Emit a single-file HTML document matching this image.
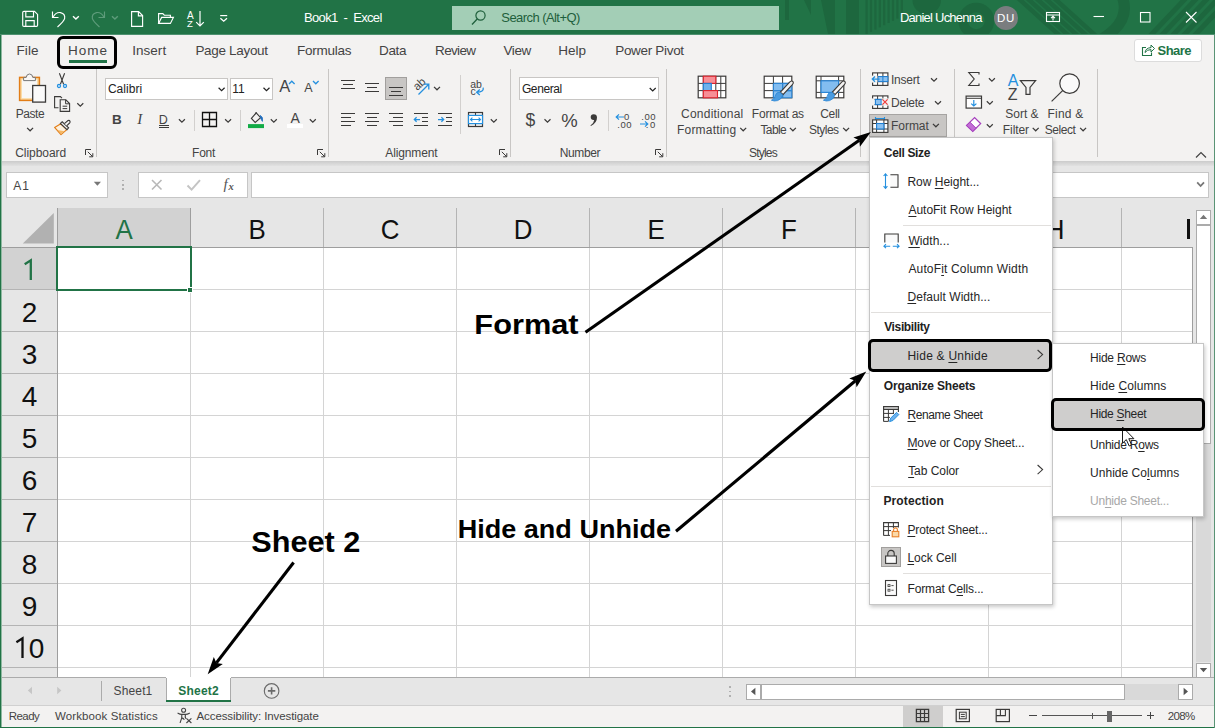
<!DOCTYPE html>
<html><head><meta charset="utf-8"><title>Excel</title>
<style>
*{box-sizing:border-box;margin:0;padding:0}
html,body{width:1215px;height:728px;overflow:hidden;background:#fff;font-family:"Liberation Sans",sans-serif}
.a{position:absolute;display:block}
.t{position:absolute;white-space:pre;font-family:"Liberation Sans",sans-serif}
.t u{text-decoration:underline;text-underline-offset:1.5px;text-decoration-thickness:1px}
</style></head><body>
<div class="a" style="left:0px;top:0px;width:1215px;height:35px;background:#217346;"></div>
<svg class="a" style="left:770px;top:0px;overflow:hidden;" width="445" height="34" viewBox="0 0 445 34"><g fill="#1d673e"><rect x="15" y="0" width="4" height="20"/><path d="M34 0H41V15Z"/><path d="M51 0H65V34H58Z"/><rect x="76" y="0" width="13" height="34"/><rect x="95.5" y="0" width="2.2" height="34.0"/><rect x="99.9" y="0" width="2.2" height="31.8"/><rect x="104.3" y="0" width="2.2" height="29.6"/><rect x="108.7" y="0" width="2.2" height="27.4"/><rect x="113.1" y="0" width="2.2" height="25.2"/><rect x="117.5" y="0" width="2.2" height="23.0"/><rect x="121.9" y="0" width="2.2" height="20.8"/><rect x="126.3" y="0" width="2.2" height="18.6"/><rect x="130.7" y="0" width="2.2" height="16.4"/><path d="M142.5 0A14.2 14.2 0 0 0 171 0Z"/></g><g fill="none" stroke="#1d673e"><circle cx="206.3" cy="20.8" r="13.2" stroke-width="9.5"/><path d="M248 -2L290 36" stroke-width="4.5"/><path d="M257 -2L299 36" stroke-width="4.5"/><path d="M266 -2L308 36" stroke-width="4.5"/><path d="M275 -2L317 36" stroke-width="4.5"/><path d="M284 -2L326 36" stroke-width="4.5"/><path d="M352 -4Q362 22 330 40" stroke-width="11"/><path d="M380 36L416 -2" stroke-width="5"/><path d="M391 36L427 -2" stroke-width="5"/><path d="M402 36L438 -2" stroke-width="5"/><path d="M413 36L449 -2" stroke-width="5"/><path d="M424 36L460 -2" stroke-width="5"/></g></svg>
<div class="a" style="left:0px;top:35px;width:1215px;height:126px;background:#f3f2f1;"></div>
<div class="a" style="left:0px;top:34px;width:1215px;height:1px;background:#4e9170;"></div>
<div class="a" style="left:0px;top:161px;width:1215px;height:6px;background:linear-gradient(#cbcbcb,#d6d6d6 40%,#e6e6e6);"></div>
<div class="a" style="left:0px;top:166px;width:1215px;height:42px;background:#e6e6e6;"></div>
<div class="a" style="left:0px;top:677px;width:1215px;height:28px;background:#e6e6e6;"></div>
<div class="a" style="left:0px;top:677px;width:1215px;height:1px;background:#ababab;"></div>
<div class="a" style="left:0px;top:705px;width:1215px;height:23px;background:#f3f2f1;"></div>
<div class="a" style="left:0px;top:705px;width:1215px;height:1px;background:#d0d0d0;"></div>
<span class="t" style="left:303.96px;top:9.00px;font-size:13px;line-height:17px;color:#fff;letter-spacing:-0.646px;">Book1  -  Excel</span>
<div class="a" style="left:452px;top:6px;width:327px;height:24px;background:#a3ceb6;"></div>
<span class="t" style="left:501.35px;top:9.00px;font-size:13px;line-height:17px;color:#1f5f3c;letter-spacing:-0.568px;">Search (Alt+Q)</span>
<svg class="a" style="left:470px;top:9px;" width="18" height="18" viewBox="0 0 18 18"><circle cx="10.5" cy="6.5" r="4.6" fill="none" stroke="#1f5f3c" stroke-width="1.2"/><path d="M7.2 10L2 15.5" stroke="#1f5f3c" stroke-width="1.3" fill="none"/></svg>
<span class="t" style="left:899.96px;top:9.00px;font-size:13px;line-height:17px;color:#fff;letter-spacing:-0.771px;">Daniel Uchenna</span>
<div class="a" style="left:994px;top:6px;width:24px;height:24px;background:#7a7d7f;border-radius:12px;"></div>
<span class="t" style="left:997.08px;top:11.00px;font-size:11.5px;line-height:15px;color:#fff;letter-spacing:0.665px;">DU</span>
<svg class="a" style="left:1045px;top:11px;" width="16" height="12" viewBox="0 0 16 12"><rect x="1.5" y="1.5" width="13" height="9" stroke="#fff" fill="none" stroke-width="1.1"/><path d="M1.5 4H14.5M8 9.5V5.5M6 7.2L8 5.3L10 7.2" stroke="#fff" fill="none" stroke-width="1.1"/></svg>
<svg class="a" style="left:1092px;top:12px;" width="14" height="10" viewBox="0 0 14 10"><path d="M1.5 4.5H12" stroke="#fff" fill="none" stroke-width="1.1"/></svg>
<svg class="a" style="left:1139px;top:11px;" width="12" height="12" viewBox="0 0 12 12"><rect x="1.5" y="1.5" width="9.5" height="9.5" stroke="#fff" fill="none" stroke-width="1.1"/></svg>
<svg class="a" style="left:1184px;top:10px;" width="14" height="14" viewBox="0 0 14 14"><path d="M2 2L12.5 12.5M12.5 2L2 12.5" stroke="#fff" fill="none" stroke-width="1.1"/></svg>
<svg class="a" style="left:21px;top:10px;" width="18" height="18" viewBox="0 0 18 18"><path d="M1.7 2.5Q1.7 1.3 2.9 1.3H13.5L16.6 4.4V15.2Q16.6 16.4 15.4 16.4H2.9Q1.7 16.4 1.7 15.2Z" stroke="#fff" fill="none" stroke-width="1.15"/><path d="M4.8 1.3V6.8H12.5V1.3M4.8 16.4V10.6H13.2V16.4" stroke="#fff" fill="none" stroke-width="1.15"/></svg>
<svg class="a" style="left:51px;top:10px;" width="16" height="18" viewBox="0 0 16 18"><path d="M1.5 1.5V7.5H7.5" stroke="#fff" fill="none" stroke-width="1.15"/><path d="M2 7.2Q5 1.8 9.5 2.6Q14.5 3.8 13.6 8.6Q13 11 6.5 17" stroke="#fff" fill="none" stroke-width="1.15"/></svg>
<svg class="a" style="left:72px;top:15px;" width="8" height="6" viewBox="0 0 8 6"><path d="M1 1.2L3.9 4L6.8 1.2" stroke="#fff" fill="none" stroke-width="1.4"/></svg>
<svg class="a" style="left:90px;top:10px;" width="16" height="18" viewBox="0 0 16 18"><path d="M14.5 1.5V7.5H8.5" stroke="#5e9c7b" fill="none" stroke-width="1.15"/><path d="M14 7.2Q11 1.8 6.5 2.6Q1.5 3.8 2.4 8.6Q3 11 9.5 17" stroke="#5e9c7b" fill="none" stroke-width="1.15"/></svg>
<svg class="a" style="left:111px;top:15px;" width="8" height="6" viewBox="0 0 8 6"><path d="M1 1.2L3.9 4L6.8 1.2" stroke="#5e9c7b" fill="none" stroke-width="1.4"/></svg>
<svg class="a" style="left:130px;top:10px;" width="14" height="18" viewBox="0 0 14 18"><path d="M1.6 1.6H8.6L12.6 5.6V16.4H1.6Z" stroke="#fff" fill="none" stroke-width="1.15"/><path d="M8.4 1.6V5.8H12.6" stroke="#fff" fill="none" stroke-width="1.15"/></svg>
<svg class="a" style="left:157px;top:12px;" width="18" height="13" viewBox="0 0 18 13"><path d="M1.6 11.4V1.6H5.8L7.3 3.2H13.4V5.4" stroke="#fff" fill="none" stroke-width="1.15"/><path d="M1.6 11.4L4.6 5.4H16.4L13.4 11.4Z" stroke="#fff" fill="none" stroke-width="1.15"/></svg>
<span class="t" style="left:187.00px;top:9.00px;font-size:10px;line-height:13px;color:#fff;letter-spacing:0.000px;">A</span>
<span class="t" style="left:187.12px;top:18.00px;font-size:9.5px;line-height:12px;color:#fff;letter-spacing:0.000px;">Z</span>
<svg class="a" style="left:195px;top:10px;" width="10" height="18" viewBox="0 0 10 18"><path d="M5 1V16M1.2 12.2L5 16L8.8 12.2" stroke="#fff" fill="none" stroke-width="1.2"/></svg>
<svg class="a" style="left:219px;top:14px;" width="10" height="9" viewBox="0 0 10 9"><path d="M1.2 1.6H8.2" stroke="#fff" stroke-width="1.2"/><path d="M1.4 4.2L4.7 7.2L8 4.2" stroke="#fff" fill="none" stroke-width="1.3"/></svg>
<span class="t" style="left:16.42px;top:42.00px;font-size:13.5px;line-height:18px;color:#444;letter-spacing:0.128px;">File</span>
<span class="t" style="left:67.92px;top:42.00px;font-size:13.5px;line-height:18px;color:#444;letter-spacing:1.003px;">Home</span>
<span class="t" style="left:132.28px;top:42.00px;font-size:13.5px;line-height:18px;color:#444;letter-spacing:0.020px;">Insert</span>
<span class="t" style="left:195.42px;top:42.00px;font-size:13.5px;line-height:18px;color:#444;letter-spacing:-0.316px;">Page Layout</span>
<span class="t" style="left:296.92px;top:42.00px;font-size:13.5px;line-height:18px;color:#444;letter-spacing:-0.239px;">Formulas</span>
<span class="t" style="left:379.12px;top:42.00px;font-size:13.5px;line-height:18px;color:#444;letter-spacing:-0.413px;">Data</span>
<span class="t" style="left:435.12px;top:42.00px;font-size:13.5px;line-height:18px;color:#444;letter-spacing:-0.680px;">Review</span>
<span class="t" style="left:503.47px;top:42.00px;font-size:13.5px;line-height:18px;color:#444;letter-spacing:-0.397px;">View</span>
<span class="t" style="left:558.22px;top:42.00px;font-size:13.5px;line-height:18px;color:#444;letter-spacing:0.037px;">Help</span>
<span class="t" style="left:615.22px;top:42.00px;font-size:13.5px;line-height:18px;color:#444;letter-spacing:-0.317px;">Power Pivot</span>
<div class="a" style="left:69px;top:60px;width:38px;height:3px;background:#217346;"></div>
<div class="a" style="left:57px;top:36px;width:60px;height:33px;border:3px solid #000;border-radius:6px;"></div>
<div class="a" style="left:1134px;top:38.5px;width:68px;height:23.5px;background:#fff;border:1px solid #dcdcdc;border-radius:3px;"></div>
<span class="t" style="left:1157.61px;top:42.00px;font-size:13px;line-height:17px;color:#217346;letter-spacing:-0.557px;font-weight:700;">Share</span>
<svg class="a" style="left:1140px;top:43px;" width="16" height="14" viewBox="0 0 16 14"><path d="M6 4.5H2.5V12.5H11.5V9.5" stroke="#217346" fill="none" stroke-width="1.1"/><path d="M5 9.5Q5.5 5 11 4.6V2L14.5 5.5L11 9V6.6Q7 6.6 5 9.5Z" stroke="#217346" fill="none" stroke-width="1"/></svg>
<svg class="a" style="left:1194px;top:150px;" width="14" height="10" viewBox="0 0 14 10"><path d="M2 7.5L7 2.5L12 7.5" stroke="#444" fill="none" stroke-width="1.2"/></svg>
<div class="a" style="left:96.0px;top:69px;width:1px;height:88px;background:#c8c6c4;"></div>
<div class="a" style="left:328.0px;top:69px;width:1px;height:88px;background:#c8c6c4;"></div>
<div class="a" style="left:510.0px;top:69px;width:1px;height:88px;background:#c8c6c4;"></div>
<div class="a" style="left:666.0px;top:69px;width:1px;height:88px;background:#c8c6c4;"></div>
<div class="a" style="left:860.0px;top:69px;width:1px;height:88px;background:#c8c6c4;"></div>
<div class="a" style="left:954.0px;top:69px;width:1px;height:88px;background:#c8c6c4;"></div>
<div class="a" style="left:1097.0px;top:69px;width:1px;height:88px;background:#c8c6c4;"></div>
<svg class="a" style="left:17px;top:72px;" width="31" height="32" viewBox="0 0 31 32"><rect x="2.6" y="5.4" width="19.8" height="23" fill="#fad9a0" stroke="#e27d17" stroke-width="1.5"/><rect x="4.9" y="7.6" width="15.2" height="18.6" fill="#f8f7f6" stroke="none"/><path d="M6.6 8.6V5.4H9.2Q9.6 2 12.5 2Q15.4 2 15.8 5.4H18.4V8.6Z" fill="#f8f7f6" stroke="#777" stroke-width="1"/><rect x="15.7" y="13.5" width="12.8" height="16.6" fill="#fafafa" stroke="#3b3a39" stroke-width="1.3"/></svg>
<span class="t" style="left:15.74px;top:106.00px;font-size:12px;line-height:16px;color:#444;letter-spacing:-0.465px;">Paste</span>
<svg class="a" style="left:26px;top:127px;" width="9" height="7.2" viewBox="0 0 9 7.2"><path d="M1.10 0.90l3.00 2.90l3.00 -2.90" stroke="#3b3a39" fill="none" stroke-width="1.2"/></svg>
<svg class="a" style="left:55px;top:72px;" width="14" height="18" viewBox="0 0 14 18"><path d="M4.4 1.2L8.6 12.2M9.6 1.2L5.4 12.2" stroke="#3b3a39" stroke-width="1.1" fill="none"/><circle cx="4" cy="14" r="1.55" fill="#cfe6f8" stroke="#2490df" stroke-width="1.2"/><circle cx="10" cy="14" r="1.55" fill="#cfe6f8" stroke="#2490df" stroke-width="1.2"/></svg>
<svg class="a" style="left:53px;top:95px;" width="19" height="18" viewBox="0 0 19 18"><path d="M5.5 12.8H1.6V1.6H7.4L9 3.2" stroke="#3b3a39" fill="none" stroke-width="1.1"/><path d="M7.2 4.8H12.8L16.6 8.6V16.4H7.2Z" fill="#f3f2f1" stroke="#3b3a39" stroke-width="1.1"/><path d="M12.6 4.8V8.8H16.6M9.6 11.2H14.2M9.6 13.6H14.2" stroke="#3b3a39" fill="none" stroke-width="1"/></svg>
<svg class="a" style="left:76px;top:102px;" width="9" height="7.2" viewBox="0 0 9 7.2"><path d="M1.30 1.30l3.00 2.90l3.00 -2.90" stroke="#3b3a39" fill="none" stroke-width="1.2"/></svg>
<svg class="a" style="left:53px;top:119px;" width="19" height="17" viewBox="0 0 19 17"><path d="M1.6 8.4L7.8 4.8L13.8 10.6L8 15.6Z" fill="#fdf1de" stroke="#e27d17" stroke-width="1.2" stroke-linejoin="round"/><path d="M4.4 11L8 15L11.6 12.2Z" fill="#f5b865"/><path d="M7.4 4.4L9.2 2.8L15.6 8.8L14 10.6Z" fill="#f3f2f1" stroke="#3b3a39" stroke-width="1.1"/><path d="M11.4 4.6L15 1.5Q16.4 0.9 17 2.2Q17.4 3.2 16.6 4L13.6 6.8" fill="#f3f2f1" stroke="#3b3a39" stroke-width="1.1"/></svg>
<span class="t" style="left:15.20px;top:145.00px;font-size:12px;line-height:16px;color:#444;letter-spacing:-0.053px;">Clipboard</span>
<svg class="a" style="left:85px;top:149px;" width="9" height="9" viewBox="0 0 9 9"><path d="M0.5 6V0.5H6" stroke="#3b3a39" fill="none" stroke-width="1"/><path d="M2.8 2.8L7.6 7.6M4.2 7.8H7.8V4.2" stroke="#3b3a39" fill="none" stroke-width="1"/></svg>
<div class="a" style="left:105px;top:77.5px;width:123px;height:22.5px;background:#fff;border:1px solid #c8c6c4;"></div>
<span class="t" style="left:107.90px;top:81.00px;font-size:12px;line-height:16px;color:#222;letter-spacing:0.060px;">Calibri</span>
<svg class="a" style="left:217px;top:87px;" width="9" height="7.2" viewBox="0 0 9 7.2"><path d="M1.60 0.80l3.00 2.90l3.00 -2.90" stroke="#222" fill="none" stroke-width="1.2"/></svg>
<div class="a" style="left:230px;top:77.5px;width:43px;height:22.5px;background:#fff;border:1px solid #c8c6c4;"></div>
<span class="t" style="left:232.34px;top:81.00px;font-size:12px;line-height:16px;color:#222;letter-spacing:0.000px;">11</span>
<svg class="a" style="left:262px;top:87px;" width="9" height="7.2" viewBox="0 0 9 7.2"><path d="M1.50 0.80l3.00 2.90l3.00 -2.90" stroke="#222" fill="none" stroke-width="1.2"/></svg>
<span class="t" style="left:279.30px;top:76.00px;font-size:16.5px;line-height:21px;color:#444;letter-spacing:0.000px;">A</span>
<svg class="a" style="left:288px;top:80px;" width="8" height="5" viewBox="0 0 8 5"><path d="M1 4L3.8 1.2L6.6 4" stroke="#2490df" fill="none" stroke-width="1.3"/></svg>
<span class="t" style="left:304.30px;top:80.00px;font-size:12.5px;line-height:16px;color:#444;letter-spacing:0.000px;">A</span>
<svg class="a" style="left:312px;top:80px;" width="8" height="5" viewBox="0 0 8 5"><path d="M1 1L3.8 3.8L6.6 1" stroke="#2490df" fill="none" stroke-width="1.3"/></svg>
<span class="t" style="left:112.06px;top:111.00px;font-size:13.5px;line-height:18px;color:#444;letter-spacing:0.000px;font-weight:700;">B</span>
<span class="t" style="left:137.30px;top:109.00px;font-size:15px;line-height:20px;color:#444;letter-spacing:0.000px;font-style:italic;font-family:'Liberation Serif',serif;">I</span>
<span class="t" style="left:158.80px;top:112.00px;font-size:12.5px;line-height:16px;color:#444;letter-spacing:0.000px;">D</span>
<div class="a" style="left:159.3px;top:125px;width:9.5px;height:1px;background:#3b3a39;"></div>
<div class="a" style="left:159.3px;top:127.3px;width:9.5px;height:1px;background:#3b3a39;"></div>
<svg class="a" style="left:178px;top:118px;" width="9" height="7.2" viewBox="0 0 9 7.2"><path d="M0.90 1.30l3.00 2.90l3.00 -2.90" stroke="#3b3a39" fill="none" stroke-width="1.2"/></svg>
<div class="a" style="left:194.0px;top:110px;width:1px;height:21px;background:#d2d0ce;"></div>
<svg class="a" style="left:201px;top:111px;" width="17" height="17" viewBox="0 0 17 17"><path d="M1.5 1.5H15.5V15.5H1.5ZM8.5 1.5V15.5M1.5 8.5H15.5" stroke="#111" fill="none" stroke-width="1.3"/></svg>
<svg class="a" style="left:224px;top:118px;" width="9" height="7.2" viewBox="0 0 9 7.2"><path d="M1.10 1.30l3.00 2.90l3.00 -2.90" stroke="#3b3a39" fill="none" stroke-width="1.2"/></svg>
<div class="a" style="left:240.0px;top:110px;width:1px;height:21px;background:#d2d0ce;"></div>
<svg class="a" style="left:248px;top:111px;" width="17" height="18" viewBox="0 0 17 18"><path d="M3.4 7.4L8.2 1.8L12.6 6.6L7.2 11.4Z" fill="#f3f2f1" stroke="#3b3a39" stroke-width="1.1"/><path d="M6.8 3.6L8.4 1" stroke="#3b3a39" stroke-width="1"/><path d="M12.4 4.4Q15.4 6 14.4 10.4Q12.8 8 12.6 6.6Z" fill="#1f6fc0" stroke="#1f6fc0" stroke-width=".8"/><rect x="0" y="13.1" width="16" height="4" fill="#12ab46"/></svg>
<svg class="a" style="left:269px;top:118px;" width="9" height="7.2" viewBox="0 0 9 7.2"><path d="M1.80 1.30l3.00 2.90l3.00 -2.90" stroke="#3b3a39" fill="none" stroke-width="1.2"/></svg>
<span class="t" style="left:290.60px;top:109.00px;font-size:14px;line-height:18px;color:#444;letter-spacing:0.000px;">A</span>
<div class="a" style="left:287px;top:124.1px;width:16px;height:4px;background:#fff;"></div>
<svg class="a" style="left:309px;top:118px;" width="9" height="7.2" viewBox="0 0 9 7.2"><path d="M0.80 1.30l3.00 2.90l3.00 -2.90" stroke="#3b3a39" fill="none" stroke-width="1.2"/></svg>
<span class="t" style="left:192.04px;top:145.00px;font-size:12px;line-height:16px;color:#444;letter-spacing:-0.207px;">Font</span>
<svg class="a" style="left:317px;top:149px;" width="9" height="9" viewBox="0 0 9 9"><path d="M0.5 6V0.5H6" stroke="#3b3a39" fill="none" stroke-width="1"/><path d="M2.8 2.8L7.6 7.6M4.2 7.8H7.8V4.2" stroke="#3b3a39" fill="none" stroke-width="1"/></svg>
<div class="a" style="left:341px;top:80px;width:14px;height:1px;background:#3b3a39;"></div>
<div class="a" style="left:343px;top:84px;width:10px;height:1px;background:#3b3a39;"></div>
<div class="a" style="left:341px;top:88px;width:14px;height:1px;background:#3b3a39;"></div>
<div class="a" style="left:365px;top:83px;width:14px;height:1px;background:#3b3a39;"></div>
<div class="a" style="left:367px;top:87px;width:10px;height:1px;background:#3b3a39;"></div>
<div class="a" style="left:365px;top:91px;width:14px;height:1px;background:#3b3a39;"></div>
<div class="a" style="left:385px;top:77px;width:22px;height:23px;background:#c8c6c4;border:1px solid #a19f9d;"></div>
<div class="a" style="left:389px;top:87px;width:14px;height:1px;background:#3b3a39;"></div>
<div class="a" style="left:391px;top:91px;width:10px;height:1px;background:#3b3a39;"></div>
<div class="a" style="left:389px;top:95px;width:14px;height:1px;background:#3b3a39;"></div>
<span class="t" style="left:412.5px;top:76.5px;font-size:11.5px;line-height:14px;color:#444;transform:rotate(-42deg);transform-origin:50% 50%;letter-spacing:-.2px">ab</span>
<svg class="a" style="left:417px;top:82px;" width="14" height="14" viewBox="0 0 14 14"><path d="M1.5 12.5L11.5 2.5M6.5 2.2H11.8V7.5" stroke="#2490df" fill="none" stroke-width="1.3"/></svg>
<svg class="a" style="left:433px;top:86px;" width="9" height="7.2" viewBox="0 0 9 7.2"><path d="M1.00 0.90l3.00 2.90l3.00 -2.90" stroke="#3b3a39" fill="none" stroke-width="1.2"/></svg>
<div class="a" style="left:460.0px;top:75px;width:1px;height:59px;background:#d2d0ce;"></div>
<span class="t" style="left:470.18px;top:77.00px;font-size:10.5px;line-height:14px;color:#444;letter-spacing:0.080px;">ab</span>
<span class="t" style="left:470.38px;top:84.00px;font-size:10.5px;line-height:14px;color:#444;letter-spacing:0.000px;">c</span>
<svg class="a" style="left:475px;top:86px;" width="10" height="11" viewBox="0 0 10 11"><path d="M8.2 1.6Q9 6.2 2 6.2M4.8 3.4L1.6 6.2L4.8 9" stroke="#2490df" fill="none" stroke-width="1.3"/></svg>
<div class="a" style="left:341px;top:113px;width:14px;height:1px;background:#3b3a39;"></div>
<div class="a" style="left:341px;top:117px;width:10px;height:1px;background:#3b3a39;"></div>
<div class="a" style="left:341px;top:121px;width:14px;height:1px;background:#3b3a39;"></div>
<div class="a" style="left:341px;top:125px;width:10px;height:1px;background:#3b3a39;"></div>
<div class="a" style="left:365px;top:113px;width:14px;height:1px;background:#3b3a39;"></div>
<div class="a" style="left:367px;top:117px;width:10px;height:1px;background:#3b3a39;"></div>
<div class="a" style="left:365px;top:121px;width:14px;height:1px;background:#3b3a39;"></div>
<div class="a" style="left:367px;top:125px;width:10px;height:1px;background:#3b3a39;"></div>
<div class="a" style="left:389px;top:113px;width:14px;height:1px;background:#3b3a39;"></div>
<div class="a" style="left:393px;top:117px;width:10px;height:1px;background:#3b3a39;"></div>
<div class="a" style="left:389px;top:121px;width:14px;height:1px;background:#3b3a39;"></div>
<div class="a" style="left:393px;top:125px;width:10px;height:1px;background:#3b3a39;"></div>
<div class="a" style="left:414px;top:113px;width:14px;height:1px;background:#3b3a39;"></div>
<div class="a" style="left:422px;top:117px;width:6px;height:1px;background:#3b3a39;"></div>
<div class="a" style="left:422px;top:121px;width:6px;height:1px;background:#3b3a39;"></div>
<div class="a" style="left:414px;top:125px;width:14px;height:1px;background:#3b3a39;"></div>
<div class="a" style="left:438px;top:113px;width:14px;height:1px;background:#3b3a39;"></div>
<div class="a" style="left:446px;top:117px;width:6px;height:1px;background:#3b3a39;"></div>
<div class="a" style="left:446px;top:121px;width:6px;height:1px;background:#3b3a39;"></div>
<div class="a" style="left:438px;top:125px;width:14px;height:1px;background:#3b3a39;"></div>
<svg class="a" style="left:413px;top:116px;" width="8" height="8" viewBox="0 0 8 8"><path d="M7 3.5H1.4M3.6 1.2L1.3 3.5L3.6 5.8" stroke="#2490df" fill="none" stroke-width="1.25"/></svg>
<svg class="a" style="left:437px;top:116px;" width="8" height="8" viewBox="0 0 8 8"><path d="M1 3.5H6.6M4.4 1.2L6.7 3.5L4.4 5.8" stroke="#2490df" fill="none" stroke-width="1.25"/></svg>
<svg class="a" style="left:467px;top:111px;" width="17" height="17" viewBox="0 0 17 17"><rect x="1.5" y="1.5" width="14" height="14" fill="none" stroke="#3b3a39" stroke-width="1.2"/><path d="M8.5 1.5V4.3M8.5 12.7V15.5" stroke="#3b3a39" stroke-width="1.1"/><rect x="1.5" y="4.4" width="14" height="8.2" fill="#fff" stroke="#2490df" stroke-width="1.2"/><path d="M3.6 8.5H13.4M5.4 6.6L3.5 8.5L5.4 10.4M11.6 6.6L13.5 8.5L11.6 10.4" stroke="#2490df" fill="none" stroke-width="1.1"/></svg>
<svg class="a" style="left:489px;top:118px;" width="9" height="7.2" viewBox="0 0 9 7.2"><path d="M1.80 1.30l3.00 2.90l3.00 -2.90" stroke="#3b3a39" fill="none" stroke-width="1.2"/></svg>
<span class="t" style="left:385.30px;top:145.00px;font-size:12px;line-height:16px;color:#444;letter-spacing:-0.122px;">Alignment</span>
<svg class="a" style="left:499px;top:149px;" width="9" height="9" viewBox="0 0 9 9"><path d="M0.5 6V0.5H6" stroke="#3b3a39" fill="none" stroke-width="1"/><path d="M2.8 2.8L7.6 7.6M4.2 7.8H7.8V4.2" stroke="#3b3a39" fill="none" stroke-width="1"/></svg>
<div class="a" style="left:519px;top:77px;width:140px;height:22.8px;background:#fff;border:1px solid #c8c6c4;"></div>
<span class="t" style="left:521.90px;top:81.00px;font-size:12px;line-height:16px;color:#222;letter-spacing:-0.383px;">General</span>
<svg class="a" style="left:648px;top:87px;" width="9" height="7.2" viewBox="0 0 9 7.2"><path d="M1.70 1.00l3.00 2.90l3.00 -2.90" stroke="#222" fill="none" stroke-width="1.2"/></svg>
<span class="t" style="left:525.62px;top:109.00px;font-size:17.5px;line-height:23px;color:#444;letter-spacing:0.000px;">$</span>
<svg class="a" style="left:543px;top:118px;" width="9" height="7.2" viewBox="0 0 9 7.2"><path d="M1.50 1.30l3.00 2.90l3.00 -2.90" stroke="#3b3a39" fill="none" stroke-width="1.2"/></svg>
<span class="t" style="left:561.15px;top:109.00px;font-size:18.5px;line-height:24px;color:#444;letter-spacing:0.000px;">%</span>
<svg class="a" style="left:589px;top:113px;" width="9" height="14" viewBox="0 0 9 14"><path d="M4.6 1.2A2.9 2.9 0 1 0 4.6 7 Q5 7 5.2 6.9Q5 10 1.4 12.4L2 13Q8 10 8 4.6Q8 1.2 4.6 1.2Z" fill="#3b3a39"/></svg>
<div class="a" style="left:608.0px;top:110px;width:1px;height:21px;background:#d2d0ce;"></div>
<span class="t" style="left:624.12px;top:111.00px;font-size:9.5px;line-height:12px;color:#444;letter-spacing:0.000px;">0</span>
<span class="t" style="left:617.14px;top:119.00px;font-size:9.5px;line-height:12px;color:#444;letter-spacing:0.615px;">.00</span>
<svg class="a" style="left:615px;top:113px;" width="10" height="8" viewBox="0 0 10 8"><path d="M9 4H1.4M4 1.4L1.2 4L4 6.6" stroke="#2490df" fill="none" stroke-width="1.2"/></svg>
<span class="t" style="left:641.14px;top:111.00px;font-size:9.5px;line-height:12px;color:#444;letter-spacing:0.615px;">.00</span>
<span class="t" style="left:645.75px;top:119.00px;font-size:9.5px;line-height:12px;color:#444;letter-spacing:1.655px;">.0</span>
<svg class="a" style="left:639px;top:120px;" width="10" height="8" viewBox="0 0 10 8"><path d="M1 4H8.6M6 1.4L8.8 4L6 6.6" stroke="#2490df" fill="none" stroke-width="1.2"/></svg>
<span class="t" style="left:559.84px;top:145.00px;font-size:12px;line-height:16px;color:#444;letter-spacing:-0.404px;">Number</span>
<svg class="a" style="left:655px;top:149px;" width="9" height="9" viewBox="0 0 9 9"><path d="M0.5 6V0.5H6" stroke="#3b3a39" fill="none" stroke-width="1"/><path d="M2.8 2.8L7.6 7.6M4.2 7.8H7.8V4.2" stroke="#3b3a39" fill="none" stroke-width="1"/></svg>
<svg class="a" style="left:697px;top:75px;" width="30" height="24" viewBox="0 0 30 24"><rect x="1.2" y="1.2" width="27.6" height="21.6" fill="#fff" stroke="#3b3a39" stroke-width="1.2"/><path d="M6.3 1.2V22.8M18.8 1.2V22.8M23.8 1.2V22.8M1.2 8.4H28.8M1.2 15.6H28.8" stroke="#3b3a39" stroke-width="1"/><rect x="6.3" y="1.2" width="12.5" height="7.2" fill="#f78f96" stroke="#e0222c" stroke-width="1.1"/><rect x="6.3" y="8.4" width="8" height="7.2" fill="#6fb1ec" stroke="#1f7fd4" stroke-width="1.1"/><rect x="6.3" y="15.6" width="14.2" height="7.2" fill="#f78f96" stroke="#e0222c" stroke-width="1.1"/></svg>
<span class="t" style="left:681.10px;top:106.00px;font-size:12px;line-height:16px;color:#444;letter-spacing:0.212px;">Conditional</span>
<span class="t" style="left:677.04px;top:122.00px;font-size:12px;line-height:16px;color:#444;letter-spacing:0.193px;">Formatting</span>
<svg class="a" style="left:739px;top:127px;" width="9" height="7.2" viewBox="0 0 9 7.2"><path d="M1.20 0.90l3.00 2.90l3.00 -2.90" stroke="#3b3a39" fill="none" stroke-width="1.2"/></svg>
<svg class="a" style="left:763px;top:75px;" width="33" height="29" viewBox="0 0 33 29"><rect x="1.2" y="1.2" width="27.6" height="21.6" fill="#fff" stroke="#3b3a39" stroke-width="1.2"/><rect x="10.4" y="8.4" width="18.4" height="14.4" fill="#83bdf0"/><path d="M10.4 1.2V22.8M19.6 1.2V22.8M1.2 8.4H28.8M1.2 15.6H28.8" stroke="#3b3a39" stroke-width="1"/><path d="M10.4 8.4V22.8M19.6 8.4V22.8M10.4 8.4H28.8M10.4 15.6H28.8M28.8 8.4V22.8H10.4" stroke="#2b86d6" fill="none" stroke-width="1.1"/><path d="M26.6 7.2Q28.6 5.2 30 6.6Q31 8 29.4 9.6L20 19.6L17.4 17Z" fill="#f3f2f1" stroke="#3b3a39" stroke-width="1.1"/><path d="M17 17.4L19.8 20Q19 24 14.6 25.6Q11 26.6 8.4 25.2Q12.6 23.6 12.6 20Q13.4 16.8 17 17.4Z" fill="#4a9be0" stroke="#2b86d6" stroke-width=".8"/></svg>
<span class="t" style="left:751.84px;top:106.00px;font-size:12px;line-height:16px;color:#444;letter-spacing:-0.220px;">Format as</span>
<span class="t" style="left:760.46px;top:122.00px;font-size:12px;line-height:16px;color:#444;letter-spacing:-0.610px;">Table</span>
<svg class="a" style="left:789px;top:127px;" width="9" height="7.2" viewBox="0 0 9 7.2"><path d="M0.90 0.90l3.00 2.90l3.00 -2.90" stroke="#3b3a39" fill="none" stroke-width="1.2"/></svg>
<svg class="a" style="left:815px;top:75px;" width="33" height="29" viewBox="0 0 33 29"><rect x="1.2" y="1.2" width="27.6" height="21.6" fill="#fff" stroke="#3b3a39" stroke-width="1.2"/><path d="M6 1.2V22.8M23.6 1.2V22.8M1.2 5.8H28.8M1.2 17.4H28.8" stroke="#3b3a39" stroke-width="1"/><rect x="6" y="5.8" width="17.6" height="11.6" fill="#83bdf0" stroke="#2b86d6" stroke-width="1.2"/><path d="M26.6 7.2Q28.6 5.2 30 6.6Q31 8 29.4 9.6L20 19.6L17.4 17Z" fill="#f3f2f1" stroke="#3b3a39" stroke-width="1.1"/><path d="M17 17.4L19.8 20Q19 24 14.6 25.6Q11 26.6 8.4 25.2Q12.6 23.6 12.6 20Q13.4 16.8 17 17.4Z" fill="#4a9be0" stroke="#2b86d6" stroke-width=".8"/></svg>
<span class="t" style="left:820.20px;top:106.00px;font-size:12px;line-height:16px;color:#444;letter-spacing:-0.273px;">Cell</span>
<span class="t" style="left:809.00px;top:122.00px;font-size:12px;line-height:16px;color:#444;letter-spacing:-0.532px;">Styles</span>
<svg class="a" style="left:842px;top:127px;" width="9" height="7.2" viewBox="0 0 9 7.2"><path d="M1.10 0.90l3.00 2.90l3.00 -2.90" stroke="#3b3a39" fill="none" stroke-width="1.2"/></svg>
<span class="t" style="left:749.00px;top:145.00px;font-size:12px;line-height:16px;color:#444;letter-spacing:-0.792px;">Styles</span>
<svg class="a" style="left:871px;top:72px;" width="18" height="15" viewBox="0 0 18 15"><rect x="1.6" y="0.9" width="15.3" height="12.5" fill="#fff" stroke="#3b3a39" stroke-width="1.15"/><path d="M6.6 0.9V13.4M11.9 0.9V13.4M1.6 4.6H16.9M1.6 9.6H16.9" stroke="#3b3a39" stroke-width="1"/><rect x="7" y="4.6" width="9.9" height="5" fill="#8cc1f0" stroke="#1f7fd4" stroke-width="1"/><path d="M11.9 4.6V9.6" stroke="#1f7fd4" stroke-width="1"/><rect x="0" y="3.6" width="6.4" height="7" fill="#f3f2f1"/><path d="M8.6 7.1H1.4M4 4.5L1.3 7.1L4 9.7" stroke="#2490df" fill="none" stroke-width="1.3"/></svg>
<span class="t" style="left:890.92px;top:72.00px;font-size:12px;line-height:16px;color:#444;letter-spacing:-0.220px;">Insert</span>
<svg class="a" style="left:930px;top:77px;" width="9" height="7.2" viewBox="0 0 9 7.2"><path d="M1.00 1.30l3.00 2.90l3.00 -2.90" stroke="#3b3a39" fill="none" stroke-width="1.2"/></svg>
<svg class="a" style="left:871px;top:95px;" width="18" height="15" viewBox="0 0 18 15"><rect x="1.6" y="0.9" width="15.3" height="12.5" fill="#fff" stroke="#3b3a39" stroke-width="1.15"/><path d="M6.6 0.9V13.4M11.9 0.9V13.4M1.6 4.4H16.9M1.6 9.6H16.9" stroke="#3b3a39" stroke-width="1"/><rect x="0" y="3.4" width="3.6" height="7.2" fill="#f3f2f1"/><rect x="4.4" y="4.4" width="5.8" height="5.2" fill="#8cc1f0" stroke="#1f7fd4" stroke-width="1.1"/><rect x="10.8" y="3.4" width="7.2" height="7.2" fill="#f3f2f1"/><path d="M11.4 4.4L16.6 9.6M16.6 4.4L11.4 9.6" stroke="#ee3b3b" stroke-width="1.2"/></svg>
<span class="t" style="left:891.04px;top:95.00px;font-size:12px;line-height:16px;color:#444;letter-spacing:-0.244px;">Delete</span>
<svg class="a" style="left:934px;top:100px;" width="9" height="7.2" viewBox="0 0 9 7.2"><path d="M1.00 1.30l3.00 2.90l3.00 -2.90" stroke="#3b3a39" fill="none" stroke-width="1.2"/></svg>
<div class="a" style="left:869px;top:114px;width:78px;height:22.5px;background:#c8c6c4;border:1px solid #a6a4a2;"></div>
<svg class="a" style="left:871px;top:116px;" width="18" height="18" viewBox="0 0 18 18"><path d="M4.5 1.1V3.9M13.5 1.1V3.9M4.5 2.5H13.5" stroke="#2490df" stroke-width="1.1" fill="none"/><rect x="1.6" y="3.9" width="15.3" height="12.5" fill="#fff" stroke="#3b3a39" stroke-width="1.15"/><path d="M5.6 3.9V16.4M12.9 3.9V16.4M1.6 7.5H16.9M1.6 13H16.9" stroke="#3b3a39" stroke-width="1"/><rect x="5.6" y="7.5" width="7.3" height="5.5" fill="#8cc1f0" stroke="#1f7fd4" stroke-width="1.1"/></svg>
<span class="t" style="left:891.04px;top:118.00px;font-size:12px;line-height:16px;color:#444;letter-spacing:-0.052px;">Format</span>
<svg class="a" style="left:932px;top:123px;" width="9" height="7.2" viewBox="0 0 9 7.2"><path d="M0.90 0.90l3.00 2.90l3.00 -2.90" stroke="#3b3a39" fill="none" stroke-width="1.2"/></svg>
<svg class="a" style="left:967px;top:71px;" width="14" height="16" viewBox="0 0 14 16"><path d="M12 3.4V1.5H1.8L7.2 8L1.8 14.5H12V12.6" stroke="#3b3a39" fill="none" stroke-width="1.15"/></svg>
<svg class="a" style="left:988px;top:77px;" width="9" height="7.2" viewBox="0 0 9 7.2"><path d="M0.90 1.30l3.00 2.90l3.00 -2.90" stroke="#3b3a39" fill="none" stroke-width="1.2"/></svg>
<svg class="a" style="left:965px;top:95px;" width="18" height="14" viewBox="0 0 18 14"><rect x="1.1" y="1.1" width="15.4" height="12" fill="#fff" stroke="#3b3a39" stroke-width="1.2"/><path d="M1.1 3.3H16.5" stroke="#3b3a39" stroke-width="1"/><path d="M8.8 5V11M6.2 8.6L8.8 11L11.4 8.6" stroke="#2490df" fill="none" stroke-width="1.2"/></svg>
<svg class="a" style="left:985px;top:100px;" width="9" height="7.2" viewBox="0 0 9 7.2"><path d="M1.80 1.30l3.00 2.90l3.00 -2.90" stroke="#3b3a39" fill="none" stroke-width="1.2"/></svg>
<svg class="a" style="left:965px;top:116px;" width="18" height="18" viewBox="0 0 18 18"><path d="M1.6 9.4L9.6 1.6L15.6 7.6L7.8 15.4Z" fill="#fff" stroke="#a53fbd" stroke-width="1.3"/><path d="M1.6 9.4L5 6.2L11 12.2L7.8 15.4Z" fill="#c36fd6" stroke="#a53fbd" stroke-width="1"/></svg>
<svg class="a" style="left:985px;top:123px;" width="9" height="7.2" viewBox="0 0 9 7.2"><path d="M1.80 1.30l3.00 2.90l3.00 -2.90" stroke="#3b3a39" fill="none" stroke-width="1.2"/></svg>
<span class="t" style="left:1007.70px;top:70.00px;font-size:16px;line-height:21px;color:#2490df;letter-spacing:0.000px;">A</span>
<span class="t" style="left:1007.72px;top:84.00px;font-size:16px;line-height:21px;color:#444;letter-spacing:0.000px;">Z</span>
<svg class="a" style="left:1019px;top:79px;" width="18" height="18" viewBox="0 0 18 18"><path d="M1.4 1.6H16.6L11 8.4V15.4H7V8.4Z" fill="none" stroke="#3b3a39" stroke-width="1.2"/></svg>
<span class="t" style="left:1005.30px;top:106.00px;font-size:12px;line-height:16px;color:#444;letter-spacing:-0.004px;">Sort &amp;</span>
<span class="t" style="left:1002.84px;top:122.00px;font-size:12px;line-height:16px;color:#444;letter-spacing:-0.092px;">Filter</span>
<svg class="a" style="left:1031px;top:127px;" width="9" height="7.2" viewBox="0 0 9 7.2"><path d="M1.70 0.90l3.00 2.90l3.00 -2.90" stroke="#3b3a39" fill="none" stroke-width="1.2"/></svg>
<svg class="a" style="left:1050px;top:72px;" width="32" height="32" viewBox="0 0 32 32"><circle cx="19.6" cy="11.6" r="9.8" fill="#fafafa" stroke="#3b3a39" stroke-width="1.2"/><path d="M12.6 18.6L1.6 29.4" stroke="#3b3a39" stroke-width="1.2"/></svg>
<span class="t" style="left:1047.54px;top:106.00px;font-size:12px;line-height:16px;color:#444;letter-spacing:0.224px;">Find &amp;</span>
<span class="t" style="left:1044.80px;top:122.00px;font-size:12px;line-height:16px;color:#444;letter-spacing:-0.448px;">Select</span>
<svg class="a" style="left:1079px;top:127px;" width="9" height="7.2" viewBox="0 0 9 7.2"><path d="M1.10 0.90l3.00 2.90l3.00 -2.90" stroke="#3b3a39" fill="none" stroke-width="1.2"/></svg>
<div class="a" style="left:6px;top:172px;width:102px;height:26px;background:#fff;border:1px solid #c6c6c6;"></div>
<span class="t" style="left:13.30px;top:178.00px;font-size:12px;line-height:16px;color:#444;letter-spacing:1.040px;">A1</span>
<svg class="a" style="left:93px;top:181px;" width="9" height="6" viewBox="0 0 9 6"><path d="M0.8 0.8H8L4.4 4.8Z" fill="#777"/></svg>
<div class="a" style="left:122.2px;top:179.7px;width:1.4px;height:1.6px;background:#b0b0b0;"></div>
<div class="a" style="left:122.2px;top:184px;width:1.4px;height:1.6px;background:#b0b0b0;"></div>
<div class="a" style="left:122.2px;top:188.3px;width:1.4px;height:1.6px;background:#b0b0b0;"></div>
<div class="a" style="left:138px;top:172px;width:110px;height:26px;background:#fff;border:1px solid #c6c6c6;"></div>
<svg class="a" style="left:150px;top:178px;" width="14" height="14" viewBox="0 0 14 14"><path d="M2 2L11.5 11.5M11.5 2L2 11.5" stroke="#b8b8b8" stroke-width="1.6" fill="none"/></svg>
<svg class="a" style="left:186px;top:178px;" width="16" height="14" viewBox="0 0 16 14"><path d="M1.5 7.5L5.6 11.6L14 2.2" stroke="#c4c4c4" stroke-width="2" fill="none"/></svg>
<span class="t" style="left:223.5px;top:175px;font-size:15px;line-height:18px;color:#555;font-family:'Liberation Serif',serif;font-style:italic">f</span>
<span class="t" style="left:228.5px;top:179.5px;font-size:10.5px;line-height:14px;color:#555;font-family:'Liberation Serif',serif;font-style:italic;font-weight:700">x</span>
<div class="a" style="left:251px;top:172px;width:958px;height:26px;background:#fff;border:1px solid #c6c6c6;"></div>
<svg class="a" style="left:1196px;top:181px;" width="10" height="8" viewBox="0 0 10 8"><path d="M1.2 1.4L4.6 5L8 1.4" stroke="#777" stroke-width="1.8" fill="none"/></svg>
<div class="a" style="left:0px;top:208px;width:1196px;height:469px;background:#fff;"></div>
<div class="a" style="left:2px;top:208px;width:1191px;height:39px;background:#e6e6e6;"></div>
<div class="a" style="left:2px;top:247px;width:55px;height:430px;background:#e6e6e6;"></div>
<div class="a" style="left:57px;top:208px;width:134px;height:39px;background:#d2d2d2;"></div>
<div class="a" style="left:2px;top:248px;width:55px;height:42px;background:#d2d2d2;"></div>
<svg class="a" style="left:22px;top:212px;" width="33" height="33" viewBox="0 0 33 33"><path d="M31.8 1L31.8 31.5L0.8 31.5Z" fill="#b1b1b1"/></svg>
<div class="a" style="left:190px;top:248px;width:1px;height:429px;background:#d4d4d4;"></div>
<div class="a" style="left:190px;top:208px;width:1px;height:39px;background:#9e9e9e;"></div>
<div class="a" style="left:323px;top:248px;width:1px;height:429px;background:#d4d4d4;"></div>
<div class="a" style="left:323px;top:208px;width:1px;height:39px;background:#b4b4b4;"></div>
<div class="a" style="left:456px;top:248px;width:1px;height:429px;background:#d4d4d4;"></div>
<div class="a" style="left:456px;top:208px;width:1px;height:39px;background:#b4b4b4;"></div>
<div class="a" style="left:589px;top:248px;width:1px;height:429px;background:#d4d4d4;"></div>
<div class="a" style="left:589px;top:208px;width:1px;height:39px;background:#b4b4b4;"></div>
<div class="a" style="left:722px;top:248px;width:1px;height:429px;background:#d4d4d4;"></div>
<div class="a" style="left:722px;top:208px;width:1px;height:39px;background:#b4b4b4;"></div>
<div class="a" style="left:855px;top:248px;width:1px;height:429px;background:#d4d4d4;"></div>
<div class="a" style="left:855px;top:208px;width:1px;height:39px;background:#b4b4b4;"></div>
<div class="a" style="left:988px;top:248px;width:1px;height:429px;background:#d4d4d4;"></div>
<div class="a" style="left:988px;top:208px;width:1px;height:39px;background:#b4b4b4;"></div>
<div class="a" style="left:1121px;top:248px;width:1px;height:429px;background:#d4d4d4;"></div>
<div class="a" style="left:1121px;top:208px;width:1px;height:39px;background:#b4b4b4;"></div>
<div class="a" style="left:57px;top:289px;width:1136px;height:1px;background:#d4d4d4;"></div>
<div class="a" style="left:2px;top:289px;width:55px;height:1px;background:#b4b4b4;"></div>
<div class="a" style="left:57px;top:331px;width:1136px;height:1px;background:#d4d4d4;"></div>
<div class="a" style="left:2px;top:331px;width:55px;height:1px;background:#b4b4b4;"></div>
<div class="a" style="left:57px;top:373px;width:1136px;height:1px;background:#d4d4d4;"></div>
<div class="a" style="left:2px;top:373px;width:55px;height:1px;background:#b4b4b4;"></div>
<div class="a" style="left:57px;top:415px;width:1136px;height:1px;background:#d4d4d4;"></div>
<div class="a" style="left:2px;top:415px;width:55px;height:1px;background:#b4b4b4;"></div>
<div class="a" style="left:57px;top:457px;width:1136px;height:1px;background:#d4d4d4;"></div>
<div class="a" style="left:2px;top:457px;width:55px;height:1px;background:#b4b4b4;"></div>
<div class="a" style="left:57px;top:499px;width:1136px;height:1px;background:#d4d4d4;"></div>
<div class="a" style="left:2px;top:499px;width:55px;height:1px;background:#b4b4b4;"></div>
<div class="a" style="left:57px;top:541px;width:1136px;height:1px;background:#d4d4d4;"></div>
<div class="a" style="left:2px;top:541px;width:55px;height:1px;background:#b4b4b4;"></div>
<div class="a" style="left:57px;top:583px;width:1136px;height:1px;background:#d4d4d4;"></div>
<div class="a" style="left:2px;top:583px;width:55px;height:1px;background:#b4b4b4;"></div>
<div class="a" style="left:57px;top:625px;width:1136px;height:1px;background:#d4d4d4;"></div>
<div class="a" style="left:2px;top:625px;width:55px;height:1px;background:#b4b4b4;"></div>
<div class="a" style="left:57px;top:667px;width:1136px;height:1px;background:#d4d4d4;"></div>
<div class="a" style="left:2px;top:667px;width:55px;height:1px;background:#b4b4b4;"></div>
<div class="a" style="left:2px;top:247px;width:1191px;height:1px;background:#9e9e9e;"></div>
<div class="a" style="left:57px;top:208px;width:1px;height:469px;background:#9e9e9e;"></div>
<div class="a" style="left:1192px;top:247px;width:1px;height:430px;background:#9e9e9e;"></div>
<span class="t" style="left:94.0px;top:213px;width:60px;text-align:center;font-size:27.5px;line-height:34px;color:#217346;transform:scaleX(.94)">A</span>
<span class="t" style="left:227.0px;top:213px;width:60px;text-align:center;font-size:27.5px;line-height:34px;color:#111;transform:scaleX(.94)">B</span>
<span class="t" style="left:360.0px;top:213px;width:60px;text-align:center;font-size:27.5px;line-height:34px;color:#111;transform:scaleX(.94)">C</span>
<span class="t" style="left:493.0px;top:213px;width:60px;text-align:center;font-size:27.5px;line-height:34px;color:#111;transform:scaleX(.94)">D</span>
<span class="t" style="left:626.0px;top:213px;width:60px;text-align:center;font-size:27.5px;line-height:34px;color:#111;transform:scaleX(.94)">E</span>
<span class="t" style="left:759.0px;top:213px;width:60px;text-align:center;font-size:27.5px;line-height:34px;color:#111;transform:scaleX(.94)">F</span>
<span class="t" style="left:892.0px;top:213px;width:60px;text-align:center;font-size:27.5px;line-height:34px;color:#111;transform:scaleX(.94)">G</span>
<span class="t" style="left:1025.0px;top:213px;width:60px;text-align:center;font-size:27.5px;line-height:34px;color:#111;transform:scaleX(.94)">H</span>
<div class="a" style="left:1187px;top:219px;width:3px;height:20px;background:#111;"></div>
<svg class="a" style="left:22px;top:258px;" width="14" height="24" viewBox="0 0 14 24"><path d="M2.7 6.3L8.8 2.4V22" stroke="#217346" stroke-width="2.3" fill="none" stroke-linejoin="miter"/></svg>
<span class="t" style="left:9.6px;top:295px;width:40px;text-align:center;font-size:28px;line-height:36px;color:#111">2</span>
<span class="t" style="left:9.6px;top:337px;width:40px;text-align:center;font-size:28px;line-height:36px;color:#111">3</span>
<span class="t" style="left:9.6px;top:379px;width:40px;text-align:center;font-size:28px;line-height:36px;color:#111">4</span>
<span class="t" style="left:9.6px;top:421px;width:40px;text-align:center;font-size:28px;line-height:36px;color:#111">5</span>
<span class="t" style="left:9.6px;top:463px;width:40px;text-align:center;font-size:28px;line-height:36px;color:#111">6</span>
<span class="t" style="left:9.6px;top:505px;width:40px;text-align:center;font-size:28px;line-height:36px;color:#111">7</span>
<span class="t" style="left:9.6px;top:547px;width:40px;text-align:center;font-size:28px;line-height:36px;color:#111">8</span>
<span class="t" style="left:9.6px;top:589px;width:40px;text-align:center;font-size:28px;line-height:36px;color:#111">9</span>
<svg class="a" style="left:13px;top:636px;" width="14" height="24" viewBox="0 0 14 24"><path d="M3.4 6.3L9.5 2.4V22" stroke="#111" stroke-width="2.3" fill="none" stroke-linejoin="miter"/></svg>
<span class="t" style="left:16.5px;top:631px;width:40px;text-align:center;font-size:28px;line-height:36px;color:#111">0</span>
<div class="a" style="left:56px;top:246px;width:136px;height:45px;border:2px solid #217346;"></div>
<div class="a" style="left:186.5px;top:286.5px;width:6px;height:6px;background:#217346;border:1px solid #fff;"></div>
<div class="a" style="left:1193px;top:208px;width:22px;height:469px;background:#e6e6e6;"></div>
<div class="a" style="left:1196px;top:210px;width:15px;height:15px;background:#fff;border:1px solid #ababab;"></div>
<svg class="a" style="left:1199px;top:214px;" width="9" height="6" viewBox="0 0 9 6"><path d="M0.8 5L4.5 0.8L8.2 5Z" fill="#777"/></svg>
<div class="a" style="left:1196px;top:225px;width:15px;height:219px;background:#fff;border:1px solid #ababab;"></div>
<div class="a" style="left:1196px;top:444px;width:15px;height:218px;background:#d9d9d9;"></div>
<div class="a" style="left:1196px;top:662.5px;width:15px;height:15px;background:#fff;border:1px solid #ababab;"></div>
<svg class="a" style="left:1199px;top:667px;" width="9" height="6" viewBox="0 0 9 6"><path d="M0.8 1L4.5 5.2L8.2 1Z" fill="#555"/></svg>
<svg class="a" style="left:26px;top:685px;" width="8" height="11" viewBox="0 0 8 11"><path d="M6 1.8L1.8 5.5L6 9.2Z" fill="#c6c6c6"/></svg>
<svg class="a" style="left:56px;top:685px;" width="8" height="11" viewBox="0 0 8 11"><path d="M1.2 1.8L5.4 5.5L1.2 9.2Z" fill="#c6c6c6"/></svg>
<div class="a" style="left:101px;top:681px;width:1px;height:19.5px;background:#ababab;"></div>
<span class="t" style="left:113.60px;top:683.00px;font-size:12px;line-height:16px;color:#444;letter-spacing:0.132px;">Sheet1</span>
<div class="a" style="left:166px;top:677px;width:65px;height:25px;background:#fff;"></div>
<div class="a" style="left:166px;top:678px;width:1px;height:23.5px;background:#ababab;"></div>
<div class="a" style="left:230.3px;top:678px;width:1px;height:23.5px;background:#ababab;"></div>
<div class="a" style="left:166px;top:699.6px;width:65.3px;height:2.3px;background:#217346;"></div>
<span class="t" style="left:178.14px;top:683.00px;font-size:12px;line-height:16px;color:#217346;letter-spacing:0.256px;font-weight:700;">Sheet2</span>
<svg class="a" style="left:263px;top:682px;" width="18" height="18" viewBox="0 0 18 18"><circle cx="8.6" cy="8.9" r="7.3" fill="none" stroke="#6a6a6a" stroke-width="1.1"/><path d="M8.6 5.2V12.6M4.9 8.9H12.3" stroke="#6a6a6a" stroke-width="1.6"/></svg>
<div class="a" style="left:729.4px;top:686px;width:1.4px;height:1.6px;background:#b0b0b0;"></div>
<div class="a" style="left:729.4px;top:690.5px;width:1.4px;height:1.6px;background:#b0b0b0;"></div>
<div class="a" style="left:729.4px;top:695px;width:1.4px;height:1.6px;background:#b0b0b0;"></div>
<div class="a" style="left:746px;top:684px;width:15px;height:15.5px;background:#fff;border:1px solid #ababab;"></div>
<svg class="a" style="left:750px;top:687px;" width="7" height="9" viewBox="0 0 7 9"><path d="M5.4 0.8V8.2L1 4.5Z" fill="#555"/></svg>
<div class="a" style="left:760.5px;top:684px;width:364.5px;height:15.5px;background:#fff;border:1px solid #ababab;"></div>
<div class="a" style="left:1125px;top:684px;width:53px;height:15.5px;background:#d9d9d9;"></div>
<div class="a" style="left:1178px;top:684px;width:15px;height:15.5px;background:#fff;border:1px solid #ababab;"></div>
<svg class="a" style="left:1182px;top:687px;" width="7" height="9" viewBox="0 0 7 9"><path d="M1.6 0.8V8.2L6 4.5Z" fill="#555"/></svg>
<span class="t" style="left:8.78px;top:709.00px;font-size:11.5px;line-height:15px;color:#444;letter-spacing:-0.554px;">Ready</span>
<span class="t" style="left:55.00px;top:709.00px;font-size:11.5px;line-height:15px;color:#444;letter-spacing:0.107px;">Workbook Statistics</span>
<svg class="a" style="left:177px;top:707px;" width="16" height="17" viewBox="0 0 16 17"><circle cx="6.6" cy="3.2" r="2" fill="none" stroke="#444" stroke-width="1.1"/><path d="M1 6.2Q3.4 7.6 4.8 7.4L8.4 7.4Q10 7.6 12.4 6.2M4.8 7.6Q5.4 11 3.2 15.4M8.4 7.6Q8 9.6 8.6 11.2M5 11.6Q6 10.4 7 12.4" stroke="#444" fill="none" stroke-width="1.15" stroke-linecap="round"/><path d="M9.4 11.4L14.4 16M14.4 11.4L9.4 16" stroke="#444" stroke-width="1.15"/></svg>
<span class="t" style="left:196.50px;top:709.00px;font-size:11.5px;line-height:15px;color:#444;letter-spacing:-0.091px;">Accessibility: Investigate</span>
<div class="a" style="left:903px;top:705.5px;width:40px;height:21px;background:#cfcecd;"></div>
<svg class="a" style="left:915px;top:708px;" width="15" height="15" viewBox="0 0 15 15"><rect x="1.4" y="1.4" width="12.2" height="12.2" fill="none" stroke="#3b3a39" stroke-width="1.3"/><path d="M5.5 1.4V13.6M9.5 1.4V13.6M1.4 5.5H13.6M1.4 9.5H13.6" stroke="#3b3a39" stroke-width="1.2"/></svg>
<svg class="a" style="left:955px;top:708px;" width="16" height="15" viewBox="0 0 16 15"><rect x="1.2" y="1.4" width="13.2" height="12.2" fill="none" stroke="#3b3a39" stroke-width="1.2"/><rect x="4.4" y="4.2" width="6.8" height="6.6" fill="none" stroke="#3b3a39" stroke-width="1"/><path d="M5.8 6.4H9.8M5.8 8.6H9.8" stroke="#3b3a39" stroke-width="1"/></svg>
<svg class="a" style="left:995px;top:708px;" width="16" height="15" viewBox="0 0 16 15"><rect x="1.2" y="1.4" width="13.2" height="12.2" fill="none" stroke="#3b3a39" stroke-width="1.2"/><path d="M5.4 1.4V7.6H10.4V1.4M1.2 7.6H5.4" stroke="#3b3a39" fill="none" stroke-width="1.1"/></svg>
<div class="a" style="left:1029px;top:715.2px;width:8px;height:1.1px;background:#444;"></div>
<div class="a" style="left:1042.3px;top:715.3px;width:99.6px;height:1px;background:#555;"></div>
<div class="a" style="left:1092.4px;top:712.5px;width:1px;height:6.5px;background:#555;"></div>
<div class="a" style="left:1107px;top:711px;width:5px;height:11px;background:#666;"></div>
<div class="a" style="left:1147px;top:715.2px;width:7.4px;height:1.1px;background:#444;"></div>
<div class="a" style="left:1150.2px;top:712px;width:1.1px;height:7.4px;background:#444;"></div>
<span class="t" style="left:1167.83px;top:709.00px;font-size:11.5px;line-height:15px;color:#444;letter-spacing:-0.635px;">208%</span>
<div class="a" style="left:869px;top:137px;width:183.5px;height:467.5px;background:#fff;border:1px solid #c6c6c6;box-shadow:1px 2px 4px rgba(0,0,0,.22);"></div>
<span class="t" style="left:883.82px;top:145.00px;font-size:12px;line-height:16px;color:#222;letter-spacing:-0.347px;font-weight:700;">Cell Size</span>
<span class="t" style="left:907.44px;top:174.00px;font-size:12px;line-height:16px;color:#262626;letter-spacing:-0.005px;">Row <u>H</u>eight...</span>
<span class="t" style="left:908.40px;top:202.00px;font-size:12px;line-height:16px;color:#262626;letter-spacing:-0.007px;"><u>A</u>utoFit Row Height</span>
<div class="a" style="left:903px;top:225px;width:148px;height:1px;background:#e1dfdd;"></div>
<span class="t" style="left:908.40px;top:233.00px;font-size:12px;line-height:16px;color:#262626;letter-spacing:0.057px;"><u>W</u>idth...</span>
<span class="t" style="left:908.40px;top:261.00px;font-size:12px;line-height:16px;color:#262626;letter-spacing:0.157px;">AutoF<u>i</u>t Column Width</span>
<span class="t" style="left:907.44px;top:289.00px;font-size:12px;line-height:16px;color:#262626;letter-spacing:0.057px;"><u>D</u>efault Width...</span>
<div class="a" style="left:871px;top:312px;width:180px;height:1px;background:#e1dfdd;"></div>
<span class="t" style="left:884.18px;top:319.00px;font-size:12px;line-height:16px;color:#222;letter-spacing:-0.362px;font-weight:700;">Visibility</span>
<div class="a" style="left:868px;top:339px;width:184px;height:32.5px;background:#cfcecd;border:3px solid #000;border-radius:5px;"></div>
<span class="t" style="left:907.44px;top:348.00px;font-size:12px;line-height:16px;color:#262626;letter-spacing:0.230px;">Hide &amp; <u>U</u>nhide</span>
<svg class="a" style="left:1036px;top:349px;" width="9" height="12" viewBox="0 0 9 12"><path d="M1.6 1L6.6 5.6L1.6 10.2" stroke="#3b3a39" fill="none" stroke-width="1.1"/></svg>
<span class="t" style="left:883.82px;top:378.00px;font-size:12px;line-height:16px;color:#222;letter-spacing:-0.173px;font-weight:700;">Organize Sheets</span>
<span class="t" style="left:907.44px;top:407.00px;font-size:12px;line-height:16px;color:#262626;letter-spacing:-0.424px;"><u>R</u>ename Sheet</span>
<span class="t" style="left:907.44px;top:435.00px;font-size:12px;line-height:16px;color:#262626;letter-spacing:-0.113px;"><u>M</u>ove or Copy Sheet...</span>
<span class="t" style="left:908.16px;top:463.00px;font-size:12px;line-height:16px;color:#262626;letter-spacing:-0.050px;"><u>T</u>ab Color</span>
<svg class="a" style="left:1036px;top:464px;" width="9" height="12" viewBox="0 0 9 12"><path d="M1.6 1L6.6 5.6L1.6 10.2" stroke="#3b3a39" fill="none" stroke-width="1.1"/></svg>
<div class="a" style="left:871px;top:486px;width:180px;height:1px;background:#e1dfdd;"></div>
<span class="t" style="left:883.46px;top:493.00px;font-size:12px;line-height:16px;color:#222;letter-spacing:0.109px;font-weight:700;">Protection</span>
<span class="t" style="left:907.44px;top:522.00px;font-size:12px;line-height:16px;color:#262626;letter-spacing:-0.156px;"><u>P</u>rotect Sheet...</span>
<span class="t" style="left:907.44px;top:550.00px;font-size:12px;line-height:16px;color:#262626;letter-spacing:-0.030px;"><u>L</u>ock Cell</span>
<div class="a" style="left:903px;top:573px;width:148px;height:1px;background:#e1dfdd;"></div>
<span class="t" style="left:907.44px;top:581.00px;font-size:12px;line-height:16px;color:#262626;letter-spacing:-0.126px;">Format C<u>e</u>lls...</span>
<svg class="a" style="left:883px;top:172px;" width="17" height="18" viewBox="0 0 17 18"><path d="M2.5 2V16.2M0.6 4L2.5 1.8L4.4 4M0.6 14.2L2.5 16.4L4.4 14.2" stroke="#2490df" fill="none" stroke-width="1.1"/><path d="M7.4 2.8H15V15.2H7.4" stroke="#3b3a39" fill="#fafafa" stroke-width="1.1"/></svg>
<svg class="a" style="left:883px;top:232px;" width="18" height="18" viewBox="0 0 18 18"><path d="M1.8 10.4V2H15.2V10.4" stroke="#3b3a39" fill="#fafafa" stroke-width="1.1"/><path d="M1 14.2H7.2M9.8 14.2H16M3 12.2L0.9 14.2L3 16.2M14 12.2L16.1 14.2L14 16.2" stroke="#2490df" fill="none" stroke-width="1.1"/></svg>
<svg class="a" style="left:882px;top:405px;" width="18" height="18" viewBox="0 0 18 18"><path d="M1.6 16.4V1.6H16.4V7" stroke="#3b3a39" fill="none" stroke-width="1.1"/><path d="M1.6 1.6H16.4V4.4H1.6Z" fill="#e6e6e6" stroke="#3b3a39" stroke-width="1.1"/><path d="M6.4 4.4V16.4M11.4 4.4V9M1.6 8.4H12M1.6 12.4H8M1.6 16.4H6.4" stroke="#3b3a39" fill="none" stroke-width="1"/><path d="M7.6 16.6L8.6 13.2L14.6 7.4L16.8 9.6L10.9 15.5Z" fill="#6fb1ec" stroke="#2490df" stroke-width="1"/></svg>
<svg class="a" style="left:882px;top:521px;" width="18" height="17" viewBox="0 0 18 17"><path d="M1.6 14.4V1.6H16.4V6.6" stroke="#3b3a39" fill="none" stroke-width="1.1"/><path d="M6.4 1.6V14.4M11.4 1.6V7M1.6 5.6H16.4M1.6 9.6H9M1.6 14.4H8" stroke="#3b3a39" fill="none" stroke-width="1"/><rect x="10.2" y="10.4" width="6.6" height="5.4" fill="#fbd9a8" stroke="#e8812a" stroke-width="1.1"/><path d="M11.6 10.4V8.8A1.9 1.9 0 0 1 15.4 8.8V10.4" stroke="#e8812a" fill="none" stroke-width="1.1"/></svg>
<div class="a" style="left:881px;top:547px;width:20px;height:20px;background:#c8c6c4;border:1px solid #a19f9d;"></div>
<svg class="a" style="left:884px;top:549px;" width="14" height="16" viewBox="0 0 14 16"><rect x="1.6" y="7" width="10.8" height="7.4" fill="#fafafa" stroke="#3b3a39" stroke-width="1.1"/><path d="M3.8 7V4.6A3.2 3.2 0 0 1 10.2 4.6V7" stroke="#3b3a39" fill="none" stroke-width="1.1"/></svg>
<svg class="a" style="left:884px;top:579px;" width="14" height="18" viewBox="0 0 14 18"><rect x="1.5" y="1.5" width="11" height="15" fill="#fafafa" stroke="#3b3a39" stroke-width="1.1"/><rect x="4" y="5.6" width="2" height="2" fill="none" stroke="#3b3a39" stroke-width=".8"/><rect x="4" y="10.2" width="2" height="2" fill="none" stroke="#3b3a39" stroke-width=".8"/><path d="M7.4 6.6H9.6M7.4 11.2H9.6" stroke="#3b3a39" stroke-width=".9"/></svg>
<div class="a" style="left:1052px;top:342.5px;width:151.5px;height:174px;background:#fff;border:1px solid #c6c6c6;box-shadow:1px 2px 4px rgba(0,0,0,.22);"></div>
<span class="t" style="left:1090.04px;top:350.00px;font-size:12px;line-height:16px;color:#262626;letter-spacing:-0.227px;">Hide <u>R</u>ows</span>
<span class="t" style="left:1090.04px;top:378.00px;font-size:12px;line-height:16px;color:#262626;letter-spacing:0.071px;">Hide <u>C</u>olumns</span>
<div class="a" style="left:1052.5px;top:399px;width:150.5px;height:30px;background:#cfcecd;"></div>
<span class="t" style="left:1090.04px;top:406.00px;font-size:12px;line-height:16px;color:#262626;letter-spacing:-0.313px;">Hide <u>S</u>heet</span>
<span class="t" style="left:1090.04px;top:465.00px;font-size:12px;line-height:16px;color:#262626;letter-spacing:0.028px;">Unhide Co<u>l</u>umns</span>
<span class="t" style="left:1090.04px;top:493.00px;font-size:12px;line-height:16px;color:#a8a8a8;letter-spacing:-0.254px;">Un<u>h</u>ide Sheet...</span>
<svg class="a" style="left:1121px;top:425px;" width="15" height="23" viewBox="0 0 15 23"><path d="M1.5 2V18.2L5.3 14.6L8.2 21L10.6 19.9L7.8 13.7H12.9Z" fill="#fff" stroke="#1a1a1a" stroke-width="1" stroke-linejoin="miter"/></svg>
<span class="t" style="left:1090.04px;top:437.00px;font-size:12px;line-height:16px;color:#262626;letter-spacing:-0.236px;">Unhide R<u>o</u>ws</span>
<div class="a" style="left:1051px;top:397.5px;width:153.5px;height:33px;border:3px solid #000;border-radius:5px;"></div>
<span class="t" style="left:474.35px;top:304px;font-size:30.76px;line-height:40px;font-weight:700;color:#000;transform-origin:0 30px;transform:scaleY(0.899)">Format</span>
<span class="t" style="left:457.81px;top:512px;font-size:27.03px;line-height:35px;font-weight:700;color:#000;transform-origin:0 26px;transform:scaleY(0.920)">Hide and Unhide</span>
<span class="t" style="left:251.28px;top:521px;font-size:30.66px;line-height:40px;font-weight:700;color:#000;transform-origin:0 31px;transform:scaleY(0.957)">Sheet 2</span>
<svg class="a" style="left:0px;top:0px;pointer-events:none;" width="1215" height="728" viewBox="0 0 1215 728"><path d="M585.5 332.3L859.3 140.3" stroke="#000" stroke-width="3.1" fill="none"/><path d="M870.9 132.1L859.9 146.8L859.3 140.3L853.4 137.4Z" fill="#000"/><path d="M676.0 531.3L855.4 380.7" stroke="#000" stroke-width="3.1" fill="none"/><path d="M866.3 371.6L856.6 387.2L855.4 380.7L849.3 378.4Z" fill="#000"/><path d="M293.6 562.5L216.4 662.9" stroke="#000" stroke-width="3.1" fill="none"/><path d="M207.7 674.2L213.8 656.9L216.4 662.9L222.8 663.9Z" fill="#000"/></svg>
<div class="a" style="left:0px;top:35px;width:1px;height:693px;background:#217346;"></div>
<div class="a" style="left:1px;top:35px;width:1px;height:693px;background:#8fb9a1;"></div>
<div class="a" style="left:0px;top:726.5px;width:1215px;height:1.5px;background:#217346;"></div>
<div class="a" style="left:1213.5px;top:35px;width:1.5px;height:693px;background:#5a9475;"></div>
</body></html>
